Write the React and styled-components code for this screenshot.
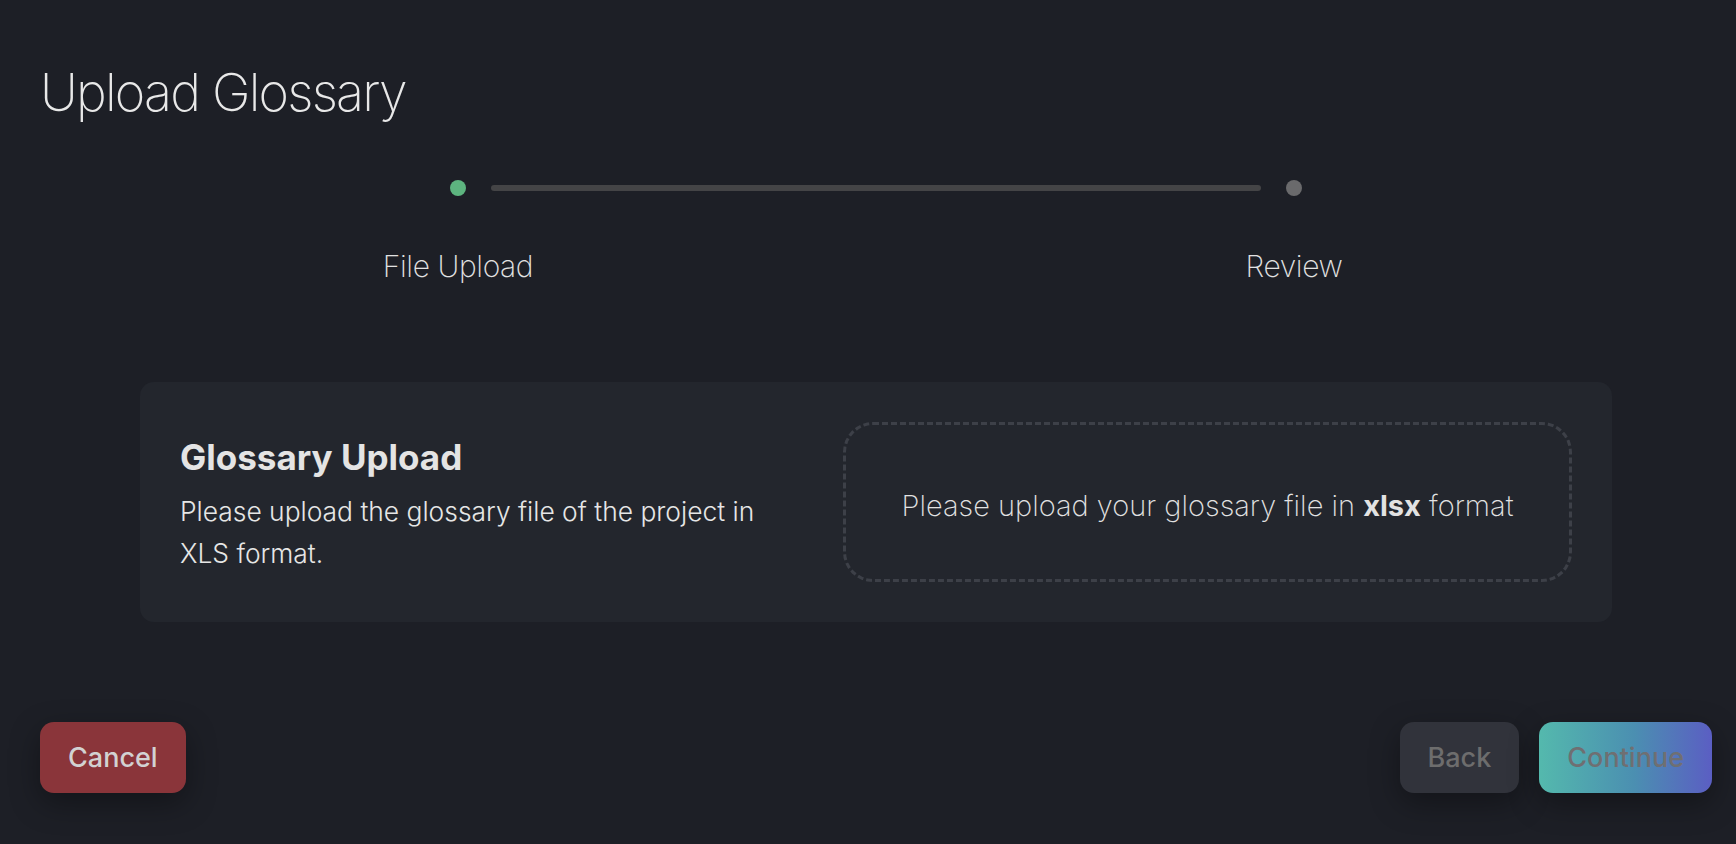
import React from 'react';
import styled, { createGlobalStyle } from 'styled-components';

const GlobalStyle = createGlobalStyle`
  * { box-sizing: border-box; }
  body {
    margin: 0;
    background: #1d1f26;
    font-family: Inter, "Noto Sans", sans-serif;
    color: #e6e6e6;
  }
`;

const Page = styled.div`
  min-height: 100vh;
  padding: 62px 24px 51px 40px;
  display: flex;
  flex-direction: column;
`;

const Title = styled.h1`
  margin: 0;
  font-size: 52px;
  line-height: 1.2;
  font-weight: 200;
  letter-spacing: -1.8px;
  color: #e8e8e8;
`;

const Stepper = styled.div`
  margin-top: 56px;
`;

const Track = styled.div`
  display: flex;
  align-items: center;
  padding: 0 calc(25% - 8px);
`;

const Dot = styled.span`
  width: 16px;
  height: 16px;
  border-radius: 50%;
  flex: none;
  background: ${p => (p.$active ? '#5db47f' : '#6a6a6c')};
`;

const Line = styled.span`
  flex: 1;
  height: 6px;
  margin: 0 25px;
  border-radius: 3px;
  background: #444446;
`;

const Labels = styled.div`
  display: grid;
  grid-template-columns: 1fr 1fr;
  margin-top: 52px;
`;

const StepLabel = styled.span`
  text-align: center;
  font-size: 30px;
  line-height: 1.2;
  font-weight: 200;
  letter-spacing: -0.4px;
  color: #e2e2e2;
`;

const Card = styled.section`
  margin: 98px 100px 0;
  padding: 40px;
  border-radius: 14px;
  background: #23262d;
  display: grid;
  grid-template-columns: 1fr 729px;
  gap: 70px;
  align-items: center;
`;

const Intro = styled.div`
  padding-top: 5px;
`;

const CardTitle = styled.h2`
  margin: 0 0 12px;
  font-size: 35px;
  line-height: 1.2;
  font-weight: 700;
  color: #e4e4e4;
`;

const CardText = styled.p`
  margin: 0;
  font-size: 26.4px;
  line-height: 42px;
  font-weight: 300;
  color: #e6e6e6;
`;

const DropZone = styled.div`
  height: 160px;
  padding-top: 6px;
  border: 3px dashed #3d4048;
  border-radius: 30px;
  display: flex;
  align-items: center;
  justify-content: center;
  font-size: 29px;
  font-weight: 200;
  color: #e2e2e2;

  b {
    font-weight: 700;
  }
`;

const Footer = styled.footer`
  margin-top: auto;
  display: flex;
  justify-content: space-between;
  align-items: center;
`;

const Group = styled.div`
  display: flex;
  gap: 20px;
`;

const variants = {
  danger: 'background: #8a353a; color: #d2d2d2;',
  muted: 'background: #31333b; color: #6d6d6d;',
  primary: 'background: linear-gradient(90deg, #54b9ad 0%, #4b8fb1 55%, #5b5ec3 100%); color: #6f6f72;',
};

const Button = styled.button`
  height: 71px;
  padding: 0 28px;
  border: none;
  border-radius: 14px;
  font-family: Inter, "Noto Sans", sans-serif;
  font-size: 27px;
  font-weight: 500;
  box-shadow: 0 10px 30px rgba(0, 0, 0, 0.35);
  cursor: pointer;
  ${p => variants[p.$variant]}
`;

export default function App() {
  return (
    <>
      <GlobalStyle />
      <Page>
        <Title>Upload Glossary</Title>
        <Stepper>
          <Track>
            <Dot $active />
            <Line />
            <Dot />
          </Track>
          <Labels>
            <StepLabel>File Upload</StepLabel>
            <StepLabel>Review</StepLabel>
          </Labels>
        </Stepper>
        <Card>
          <Intro>
            <CardTitle>Glossary Upload</CardTitle>
            <CardText>Please upload the glossary file of the project in XLS format.</CardText>
          </Intro>
          <DropZone>
            <span>Please upload your glossary file in <b>xlsx</b> format</span>
          </DropZone>
        </Card>
        <Footer>
          <Button $variant="danger">Cancel</Button>
          <Group>
            <Button $variant="muted">Back</Button>
            <Button $variant="primary">Continue</Button>
          </Group>
        </Footer>
      </Page>
    </>
  );
}
